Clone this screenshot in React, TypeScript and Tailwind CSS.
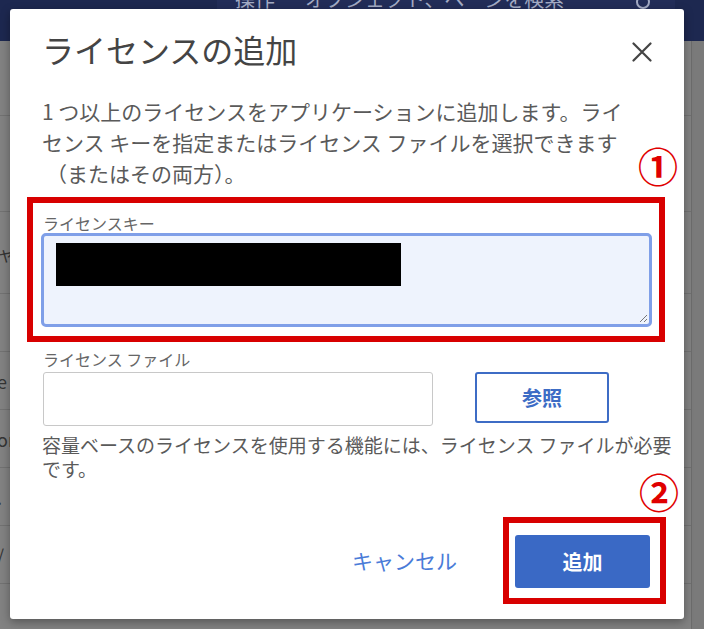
export default function App() {
  const rows = [
    { h: 75, t: "" },
    { h: 96, t: "" },
    { h: 82, t: "ャ" },
    { h: 58, t: "" },
    { h: 58, t: "e" },
    { h: 58, t: "or" },
    { h: 58, t: "." },
    { h: 58, t: "/" },
  ];
  return (
    <div className="relative w-[704px] h-[629px] overflow-hidden bg-[#828282] font-['Noto_Sans_CJK_JP','Noto_Sans',sans-serif]">
      {/* background header */}
      <div className="h-[41px] bg-[#1d2850] flex items-start">
        <div className="ml-[217px] w-[458px] h-[41px] bg-[#222d58] flex items-start justify-between pl-[18px] pr-[22px] overflow-hidden">
          <span className="text-[#a3abc4] text-[20px] leading-none mt-[-11px] whitespace-nowrap">
            操作<span className="ml-[30px]">オブジェクト、ページを検索</span>
          </span>
          <svg width="18" height="18" viewBox="0 0 18 18" className="mt-[-6px]">
            <circle cx="8" cy="8" r="6" fill="none" stroke="#a3abc4" strokeWidth="2" />
          </svg>
        </div>
      </div>
      {/* background rows */}
      <div className="flex flex-col">
        {rows.map((r, i) => (
          <div
            key={i}
            style={{ height: r.h }}
            className="border-b border-[#727272] flex items-center"
          >
            <span className="ml-[-3px] text-[18px] text-[#353535] leading-none">{r.t}</span>
          </div>
        ))}
      </div>
      <div className="absolute right-0 top-[41px] bottom-0 w-[13px] bg-[#7a7a7a] border-l border-[#6c6c6c]" />

      {/* dialog */}
      <div className="absolute left-[10px] top-[9px] w-[674px] h-[610px] bg-white rounded-[3px] shadow-[0_3px_10px_rgba(0,0,0,0.35)] flex flex-col px-[32px]">
        <div className="flex items-center justify-between pt-[20px]">
          <h1 className="text-[32px] leading-[40px] text-[#444] font-normal whitespace-nowrap">ライセンスの追加</h1>
          <svg width="20" height="20" viewBox="0 0 20 20" className="mt-[6px]">
            <path d="M1.5 1.5L18.5 18.5M18.5 1.5L1.5 18.5" stroke="#444" strokeWidth="2.2" strokeLinecap="round" />
          </svg>
        </div>

        <div className="mt-[27px] text-[21px] leading-[31px] text-[#5a5a5a] whitespace-nowrap">
          <div>1 つ以上のライセンスをアプリケーションに追加します。ライ</div>
          <div>センス キーを指定またはライセンス ファイルを選択できます</div>
          <div className="pl-[4px]">（またはその両方）。</div>
        </div>

        <div className="mt-[8px] -ml-[15px] -mr-[13px] border-[6px] border-[#d80000] pt-[10px] pl-[8px] pr-[7px] pb-[9px]">
          <div className="text-[16px] leading-[20px] text-[#666] pl-[2px] whitespace-nowrap">ライセンスキー</div>
          <div className="relative h-[94px] border-[3px] border-[#7f9fe8] rounded-[5px] bg-[#eef3fd] pt-[7px] pl-[12px]">
            <div className="w-[345px] h-[43px] bg-black" />
            <svg width="10" height="10" viewBox="0 0 10 10" className="absolute right-[1px] bottom-[1px]">
              <path d="M9 2L2 9M9 6L6 9" stroke="#777" strokeWidth="1" />
            </svg>
          </div>
        </div>

        <div className="mt-[7px] text-[16px] leading-[20px] text-[#666] pl-[1px] whitespace-nowrap">ライセンス ファイル</div>
        <div className="flex items-start mt-[3px]">
          <div className="ml-[1px] w-[390px] h-[54px] border border-[#c8c8c8] rounded-[3px]" />
          <div className="ml-[42px] w-[134px] h-[51px] border-2 border-[#3d6cc5] rounded-[3px] flex items-center justify-center text-[#3d6cc5] text-[20px] font-bold">
            参照
          </div>
        </div>
        <div className="mt-[7px] text-[19px] leading-[24px] text-[#5a5a5a] whitespace-nowrap">
          <div>容量ベースのライセンスを使用する機能には、ライセンス ファイルが必要</div>
          <div>です。</div>
        </div>

        <div className="mt-auto mb-[15px] -mr-[14px] flex justify-end items-center">
          <span className="text-[21px] text-[#4a7bd8] whitespace-nowrap">キャンセル</span>
          <div className="ml-[46px] border-[6px] border-[#d80000] pl-[6px] pr-[10px] pt-[12px] pb-[10px]">
            <div className="w-[135px] h-[53px] bg-[#3a69c5] rounded-[3px] flex items-center justify-center text-white text-[20px] font-bold">
              追加
            </div>
          </div>
        </div>

        <span className="absolute left-[648px] top-[156px] -translate-x-1/2 -translate-y-1/2 text-[40px] leading-none font-bold text-[#e00000]">①</span>
        <span className="absolute left-[649px] top-[482px] -translate-x-1/2 -translate-y-1/2 text-[40px] leading-none font-bold text-[#e00000]">②</span>
      </div>
    </div>
  );
}
